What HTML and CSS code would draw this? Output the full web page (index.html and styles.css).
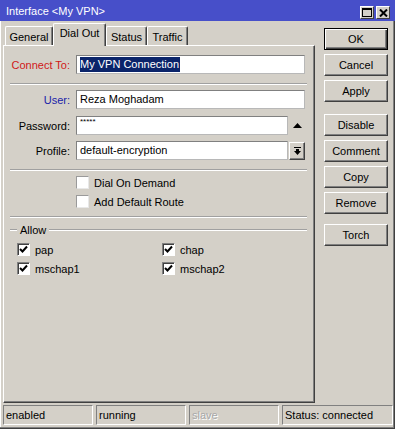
FILE: index.html
```html
<!DOCTYPE html>
<html lang="en">
<head>
    <meta charset="UTF-8">
    <title>Interface &lt;My VPN&gt;</title>
    <link rel="stylesheet" href="styles.css">
</head>
<body>
    <div class="window">
        <div class="titlebar">
            <span class="title">Interface &lt;My VPN&gt;</span>
            <div class="title-buttons">
                <span class="tbtn">
                    <svg width="10" height="9" viewBox="0 0 10 9"><rect x="0.5" y="0.5" width="9" height="8" fill="none" stroke="#000"/><rect x="0" y="0" width="10" height="2" fill="#000"/></svg>
                </span>
                <span class="tbtn">
                    <svg width="9" height="8" viewBox="0 0 9 8"><path d="M1 0.5 L8 7.5 M8 0.5 L1 7.5" stroke="#000" stroke-width="2"/></svg>
                </span>
            </div>
        </div>

        <div class="content">
            <div class="left">
                <div class="tabs">
                    <div class="tab tab-general">General</div>
                    <div class="tab tab-active">Dial Out</div>
                    <div class="tab tab-status">Status</div>
                    <div class="tab tab-traffic">Traffic</div>
                </div>

                <div class="panel">
                    <div class="row">
                        <label class="label label-red">Connect To:</label>
                        <div class="field field-wide"><span class="selected">My VPN Connection</span></div>
                    </div>

                    <div class="sep"></div>

                    <div class="row">
                        <label class="label label-blue">User:</label>
                        <div class="field field-wide">Reza Moghadam</div>
                    </div>

                    <div class="row row-password">
                        <label class="label">Password:</label>
                        <div class="field field-short"><span class="stars">*****</span></div>
                        <div class="side">
                            <svg width="9" height="5" viewBox="0 0 9 5"><path d="M0 5 L4.5 0 L9 5 Z" fill="#000"/></svg>
                        </div>
                    </div>

                    <div class="row row-profile">
                        <label class="label">Profile:</label>
                        <div class="field field-short">default-encryption</div>
                        <div class="dropbtn">
                            <svg width="7" height="8" viewBox="0 0 7 8"><rect x="0" y="0" width="7" height="1" fill="#000"/><rect x="2" y="2" width="3" height="2" fill="#000"/><path d="M0 4 L7 4 L3.5 8 Z" fill="#000"/></svg>
                        </div>
                    </div>

                    <div class="sep"></div>

                    <div class="checks">
                        <div class="check-row">
                            <span class="box"></span>
                            <span>Dial On Demand</span>
                        </div>
                        <div class="check-row">
                            <span class="box"></span>
                            <span>Add Default Route</span>
                        </div>
                    </div>

                    <div class="sep sep-low"></div>

                    <div class="group">
                        <div class="group-title">
                            <span class="group-line group-line-start"></span>
                            <span class="group-name">Allow</span>
                            <span class="group-line"></span>
                        </div>
                        <div class="allow-grid">
                            <div class="check-row">
                                <span class="box checked"><svg width="9" height="9" viewBox="0 0 9 9"><path d="M1 4 L3.5 6.5 L8 1.5" fill="none" stroke="#000" stroke-width="2"/></svg></span>
                                <span>pap</span>
                            </div>
                            <div class="check-row">
                                <span class="box checked"><svg width="9" height="9" viewBox="0 0 9 9"><path d="M1 4 L3.5 6.5 L8 1.5" fill="none" stroke="#000" stroke-width="2"/></svg></span>
                                <span>chap</span>
                            </div>
                            <div class="check-row">
                                <span class="box checked"><svg width="9" height="9" viewBox="0 0 9 9"><path d="M1 4 L3.5 6.5 L8 1.5" fill="none" stroke="#000" stroke-width="2"/></svg></span>
                                <span>mschap1</span>
                            </div>
                            <div class="check-row">
                                <span class="box checked"><svg width="9" height="9" viewBox="0 0 9 9"><path d="M1 4 L3.5 6.5 L8 1.5" fill="none" stroke="#000" stroke-width="2"/></svg></span>
                                <span>mschap2</span>
                            </div>
                        </div>
                    </div>
                </div>
            </div>

            <div class="buttons">
                <button class="btn btn-default">OK</button>
                <button class="btn">Cancel</button>
                <button class="btn">Apply</button>
                <button class="btn btn-gap">Disable</button>
                <button class="btn">Comment</button>
                <button class="btn">Copy</button>
                <button class="btn">Remove</button>
                <button class="btn btn-gap-small">Torch</button>
            </div>
        </div>

        <div class="statusbar">
            <div class="cell">enabled</div>
            <div class="cell">running</div>
            <div class="cell cell-disabled">slave</div>
            <div class="cell cell-wide">Status: connected</div>
        </div>
    </div>
</body>
</html>
```

FILE: styles.css
```css
body {
    margin: 0;
    font-family: 'Liberation Sans', Arial, sans-serif;
    font-size: 11px;
    color: #000;
    background: #d4d0c8;
}

.window {
    width: 395px;
    height: 429px;
    box-sizing: border-box;
    background: #d4d0c8;
    box-shadow: inset -1px -1px #404040, inset -2px -2px #808080, inset 1px 0 #fff;
}

.titlebar {
    height: 21px;
    background: #474fc9;
    color: #fff;
    display: flex;
    align-items: center;
    padding: 0 5px 0 6px;
}

.title {
    flex: 1;
    font-size: 11px;
}

.title-buttons {
    display: flex;
    gap: 2px;
    margin-top: 4px;
}

.tbtn {
    width: 14px;
    height: 13px;
    box-sizing: border-box;
    background: #d4d0c8;
    border: 1px solid;
    border-color: #fff #404040 #404040 #fff;
    display: flex;
    align-items: center;
    justify-content: center;
}

.content {
    display: flex;
    padding: 2px 0 0 3px;
}

.left {
    width: 312px;
}

.tabs {
    display: flex;
    align-items: flex-end;
    height: 22px;
    padding-left: 2px;
}

.tab {
    height: 19px;
    box-sizing: border-box;
    border: 1px solid;
    border-color: #fff #404040 transparent #fff;
    border-bottom: none;
    border-radius: 2px 2px 0 0;
    box-shadow: inset -1px 0 #808080;
    display: flex;
    align-items: center;
    justify-content: center;
    padding-top: 1px;
}

.tab-general { width: 48px; }
.tab-status { width: 41px; }
.tab-traffic { width: 41px; }

.tab-active {
    width: 53px;
    height: 23px;
    margin-bottom: -1px;
    position: relative;
    z-index: 1;
    background: #d4d0c8;
    padding-top: 0;
    padding-bottom: 4px;
}

.panel {
    height: 358px;
    box-sizing: border-box;
    border: 1px solid;
    border-color: #fff #404040 #404040 #fff;
    box-shadow: inset -1px -1px #808080;
    padding-top: 9px;
}

.row {
    display: flex;
    align-items: center;
    height: 19px;
}

.row-password {
    margin-top: 7px;
}

.row-profile {
    margin-top: 6px;
}

.label {
    width: 66px;
    text-align: right;
    margin-right: 6px;
}

.label-red { color: #d01818; }
.label-blue { color: #1a22a8; }

.field {
    height: 19px;
    box-sizing: border-box;
    background: #fff;
    border: 1px solid;
    border-color: #808080 #b8b8b8 #b8b8b8 #808080;
    padding-left: 3px;
    line-height: 17px;
    white-space: nowrap;
    overflow: hidden;
}

.field-wide { width: 229px; }
.field-short { width: 212px; }

.selected {
    background: #0a246a;
    color: #fff;
    padding: 1px 1px 2px 0;
}

.stars {
    font-size: 8px;
    vertical-align: top;
    line-height: 10px;
}

.side {
    width: 17px;
    display: flex;
    justify-content: center;
    align-items: center;
    padding-left: 1px;
}

.dropbtn {
    width: 16px;
    height: 18px;
    box-sizing: border-box;
    border: 1px solid;
    border-color: #fff #404040 #404040 #fff;
    box-shadow: inset -1px -1px #808080;
    display: flex;
    justify-content: center;
    align-items: center;
    margin-left: 1px;
}

.sep {
    border-top: 1px solid #a0a0a0;
    border-bottom: 1px solid #fff;
    margin: 9px 7px 5px 6px;
}

.sep-low {
    margin-top: 8px;
}

.checks {
    padding-left: 72px;
    display: flex;
    flex-direction: column;
    gap: 6px;
}

.check-row {
    display: flex;
    align-items: center;
    height: 13px;
}

.box {
    width: 13px;
    height: 13px;
    box-sizing: border-box;
    background: #fff;
    border: 1px solid;
    border-color: #9a9a9a #e8e8e8 #e8e8e8 #9a9a9a;
    margin-right: 5px;
    display: flex;
    align-items: center;
    justify-content: center;
}

.box.checked {
    border-color: #808080 #fff #fff #808080;
    box-shadow: inset 1px 1px #404040;
}

.group {
    margin: 5px 7px 0 6px;
}

.group-title {
    display: flex;
    align-items: center;
    height: 13px;
}

.group-line {
    flex: 1;
    border-top: 1px solid #a0a0a0;
    border-bottom: 1px solid #fff;
}

.group-line-start {
    flex: none;
    width: 7px;
}

.group-name {
    padding: 0 3px;
}

.allow-grid {
    display: grid;
    grid-template-columns: 145px 1fr;
    row-gap: 6px;
    padding: 7px 0 0 7px;
}

.buttons {
    display: flex;
    flex-direction: column;
    gap: 4px;
    margin: 5px 0 0 9px;
}

.btn {
    width: 64px;
    height: 22px;
    box-sizing: border-box;
    background: #d4d0c8;
    border: 1px solid;
    border-color: #fff #404040 #404040 #fff;
    box-shadow: inset -1px -1px #808080;
    font-family: 'Liberation Sans', Arial, sans-serif;
    font-size: 11px;
    color: #000;
    padding: 0;
}

.btn-default {
    border: 1px solid #000;
    box-shadow: inset 1px 1px #fff, inset -1px -1px #404040, inset -2px -2px #808080;
}

.btn-gap { margin-top: 8px; }
.btn-gap-small { margin-top: 6px; }

.statusbar {
    display: flex;
    gap: 3px;
    padding-left: 3px;
    margin-top: 2px;
}

.cell {
    width: 90px;
    height: 20px;
    box-sizing: border-box;
    border: 1px solid;
    border-color: #808080 #fff #fff #808080;
    padding-left: 2px;
    line-height: 18px;
}

.cell-disabled {
    color: #a8a8a8;
    text-shadow: 1px 1px #fff;
}

.cell-wide {
    width: 111px;
}
```
